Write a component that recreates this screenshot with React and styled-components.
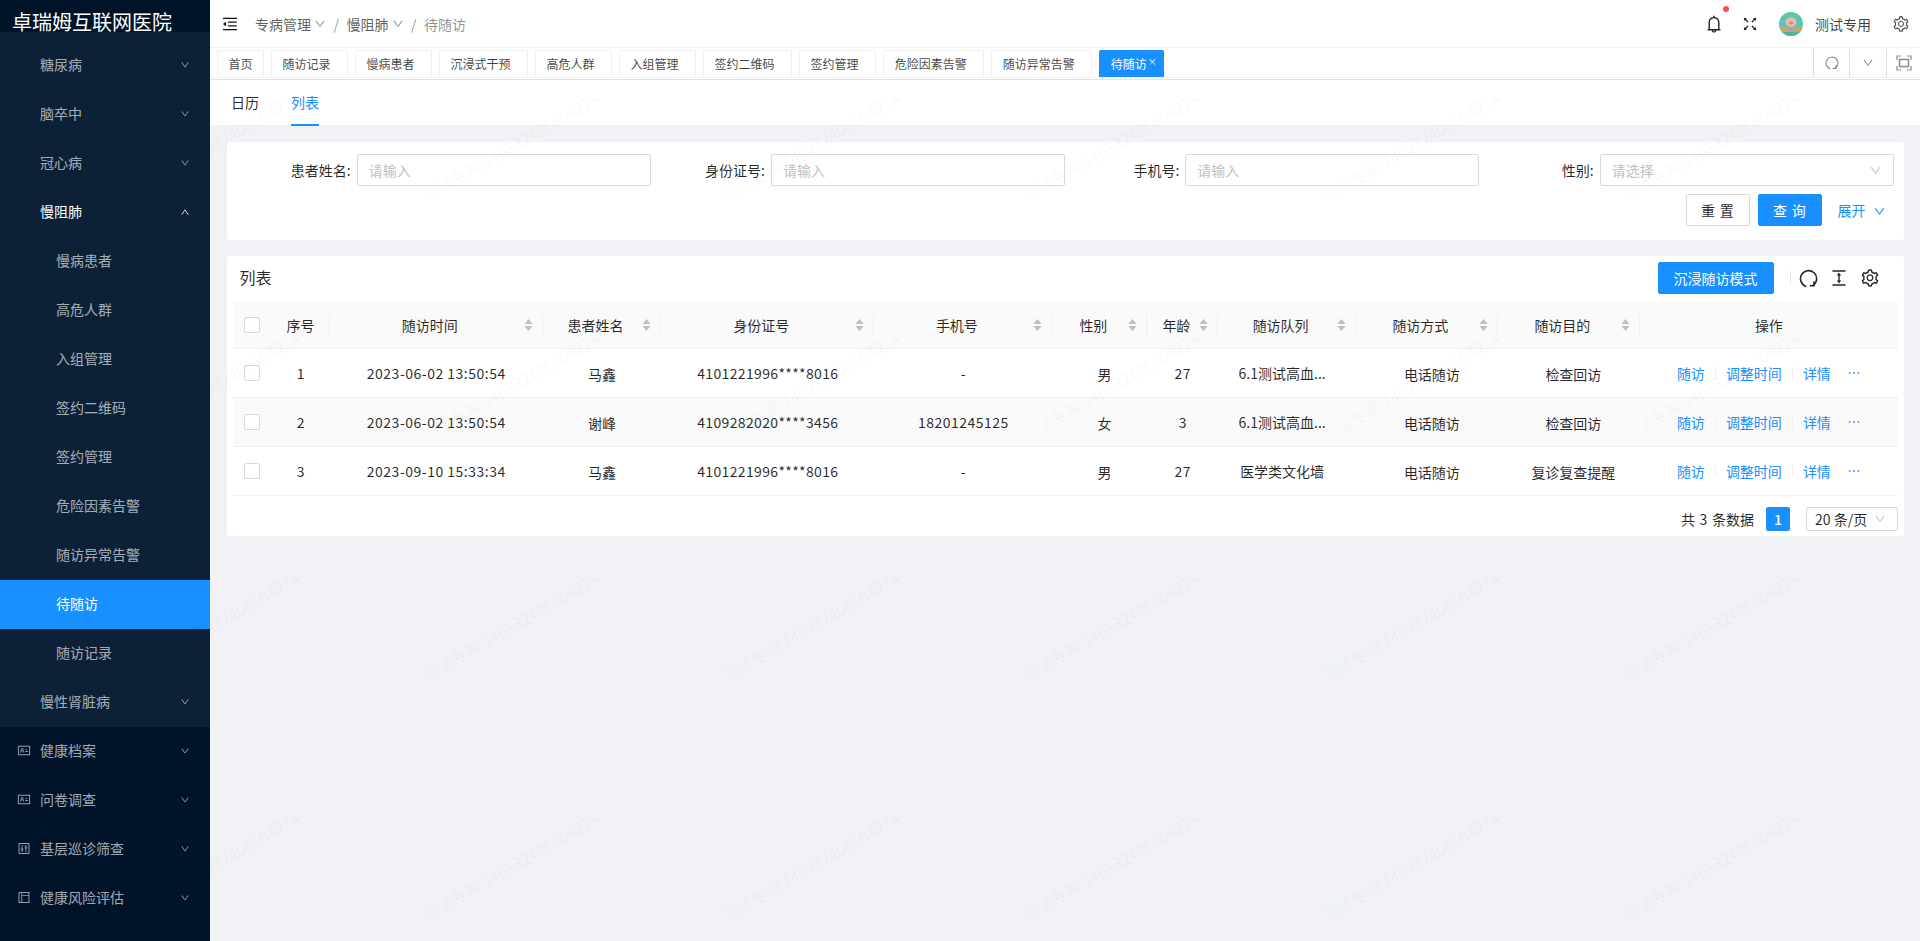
import React from 'react';
import styled, { createGlobalStyle } from 'styled-components';
import {
  AiOutlineMenuFold, AiOutlineDown, AiOutlineUp, AiOutlineBell, AiOutlineFullscreen,
  AiOutlineSetting, AiOutlineColumnHeight, AiOutlineEllipsis,
  AiOutlineIdcard, AiOutlineControl, AiOutlineLayout,
} from 'react-icons/ai';

const FONT = '"Noto Sans CJK SC", "Noto Sans", sans-serif';

const Global = createGlobalStyle`
  html, body { margin: 0; padding: 0; height: 100%; overflow: hidden; background: #f0f2f5; }
  body { font-family: ${FONT}; font-size: 14px; color: rgba(0,0,0,.85); }
  * { box-sizing: border-box; }
`;

const Page = styled.div`
  position: relative;
  display: grid;
  grid-template-columns: 210px 1fr;
  width: 1920px;
  height: 941px;
  overflow: hidden;
`;

/* ---------- sidebar ---------- */
const Sidebar = styled.aside`
  display: flex;
  flex-direction: column;
  background: #001329;
  height: 100%;
`;
const Logo = styled.div`
  height: 32px;
  overflow: hidden;
  padding-left: 12px;
  font-size: 20px;
  line-height: 44px;
  color: #fff;
  white-space: nowrap;
`;
const SubMenu = styled.div`
  background: #0c2136;
  padding-top: 8.5px;
`;
const MenuItem = styled.div`
  display: flex;
  align-items: center;
  height: 49px;
  padding: 0 20px 2px ${p => p.$indent}px;
  color: ${p => (p.$active || p.$open ? '#fff' : 'rgba(255,255,255,.65)')};
  background: ${p => (p.$active ? '#1890ff' : 'transparent')};
`;
const MenuLabel = styled.span`
  flex: 1;
`;
const MenuIcon = styled.span`
  display: flex;
  width: 14px;
  margin-right: 9px;
  font-size: 15px;
  color: rgba(255,255,255,.6);
`;
const MenuArrow = styled.span`
  display: flex;
  font-size: 10px;
  padding-top: 2px;
`;

/* ---------- main ---------- */
const Main = styled.main`
  display: flex;
  flex-direction: column;
  min-width: 0;
`;
const Header = styled.header`
  display: flex;
  align-items: center;
  height: 48px;
  padding: 0 10px 0 11px;
  background: #fff;
  border-bottom: 1px solid #f0f0f0;
`;
const CollapseButton = styled.span`
  display: flex;
  font-size: 18px;
  color: #111;
  margin-right: 16px;
`;
const Crumb = styled.span`
  display: flex;
  align-items: center;
  color: ${p => (p.$last ? 'rgba(0,0,0,.45)' : 'rgba(0,0,0,.65)')};
  font-size: 14px;
`;
const CrumbArrow = styled.span`
  display: flex;
  margin-left: 3px;
  font-size: 12px;
  color: rgba(0,0,0,.45);
`;
const CrumbSep = styled.span`
  margin: 0 7.5px;
  color: rgba(0,0,0,.45);
`;
const HeaderRight = styled.div`
  margin-left: auto;
  display: flex;
  align-items: center;
`;
const BellWrap = styled.span`
  position: relative;
  display: flex;
  font-size: 20px;
  color: #222;
  margin-right: 17px;
`;
const RedDot = styled.i`
  position: absolute;
  top: -8px;
  right: -5px;
  width: 6px;
  height: 6px;
  border-radius: 50%;
  background: #ff4d4f;
`;
const HeadIcon = styled.span`
  display: flex;
  font-size: ${p => p.$size || 16}px;
  color: ${p => p.$color || '#222'};
`;
const Avatar = styled.svg`
  width: 24px;
  height: 24px;
  border-radius: 50%;
  margin: 0 12px 0 20px;
`;
const UserName = styled.span`
  font-size: 14px;
  margin-right: 21px;
  color: rgba(0,0,0,.75);
`;

const TabBar = styled.div`
  display: flex;
  height: 32px;
  padding: 2px 0 0 7px;
  background: #fff;
  border-bottom: 1px solid #e4e4e4;
  box-shadow: inset 0 -1px 0 #fff, inset 0 -2px 0 #f0f0f0;
`;
const Tabs = styled.div`
  display: flex;
  gap: 7px;
  flex: 1;
  height: 27px;
`;
const Tab = styled.div`
  display: flex;
  align-items: center;
  height: 27px;
  padding: 0 10.5px 2px;
  font-size: 12px;
  white-space: nowrap;
  border-radius: 2px 2px 0 0;
  color: ${p => (p.$active ? '#fff' : 'rgba(0,0,0,.75)')};
  background: ${p => (p.$active ? '#1890ff' : '#fff')};
  border: 1px solid ${p => (p.$active ? '#1890ff' : '#f0f0f0')};
  border-bottom: 0;
`;
const TabClose = styled.span`
  display: inline-block;
  width: 6px;
  font-size: 9px;
  line-height: 9px;
  margin-top: -3px;
  margin-right: -1px;
  margin-left: 1px;
  color: ${p => (p.$show ? '#fff' : 'transparent')};
`;
const TabTool = styled.div`
  display: flex;
  align-items: center;
  justify-content: center;
  width: ${p => p.$w}px;
  height: 28px;
  margin-top: -1px;
  border-left: 1px solid #dcdcdc;
  color: #8c8c8c;
  font-size: ${p => p.$size || 14}px;
`;

const PageTabs = styled.div`
  display: flex;
  gap: 32px;
  height: 45px;
  padding-left: 21px;
  background: #fff;
`;
const PageTab = styled.div`
  height: 46px;
  line-height: 44px;
  font-size: 14px;
  color: ${p => (p.$active ? '#1890ff' : 'rgba(0,0,0,.85)')};
  border-bottom: 2px solid ${p => (p.$active ? '#1890ff' : 'transparent')};
`;

const Body = styled.div`
  flex: 1;
  display: flex;
  flex-direction: column;
  gap: 16px;
  padding: 17px 16px 0 17px;
`;
const SearchCard = styled.section`
  height: 98px;
  padding: 12px 10.5px 0 9.2px;
  background: #fff;
  border-radius: 2px;
`;
const SearchGrid = styled.div`
  display: grid;
  grid-template-columns: repeat(4, 1fr);
`;
const Field = styled.div`
  display: grid;
  grid-template-columns: 114.5px 1fr;
  column-gap: 6px;
  align-items: center;
`;
const FieldLabel = styled.label`
  text-align: right;
  font-size: 14px;
  color: rgba(0,0,0,.85);
`;
const InputBox = styled.div`
  display: flex;
  align-items: center;
  justify-content: space-between;
  height: 32px;
  padding: 0 11px;
  border: 1px solid #d9d9d9;
  border-radius: 2px;
  background: #fff;
  font-size: 14px;
  color: #bfbfbf;
`;
const SelectArrow = styled.span`
  display: flex;
  font-size: 13px;
  color: #bfbfbf;
`;
const SearchActions = styled.div`
  display: flex;
  align-items: center;
  justify-content: flex-end;
  gap: 8px;
  margin-top: 8px;
  padding-right: 8px;
`;
const Button = styled.button`
  display: inline-flex;
  align-items: center;
  justify-content: center;
  height: 32px;
  width: ${p => p.$w}px;
  padding: 0;
  font-family: ${FONT};
  font-size: 14px;
  border-radius: 2px;
  border: 1px solid ${p => (p.$primary ? '#1890ff' : '#d9d9d9')};
  background: ${p => (p.$primary ? '#1890ff' : '#fff')};
  color: ${p => (p.$primary ? '#fff' : 'rgba(0,0,0,.85)')};
  letter-spacing: ${p => (p.$spaced ? '.34em' : '0')};
  text-indent: ${p => (p.$spaced ? '.34em' : '0')};
`;
const Expand = styled.span`
  display: inline-flex;
  align-items: center;
  gap: 7px;
  margin-left: 8px;
  color: #1890ff;
  font-size: 14px;
`;
const ExpandIcon = styled.span`
  display: flex;
  font-size: 13px;
  padding-top: 2px;
`;

const TableCard = styled.section`
  height: 280px;
  padding: 0 6.4px;
  background: #fff;
  border-radius: 2px;
`;
const Toolbar = styled.div`
  display: flex;
  align-items: flex-start;
  height: 46px;
  padding: 6px 17px 0 6px;
`;
const ToolTitle = styled.div`
  flex: 1;
  font-size: 16px;
  line-height: 31px;
  color: rgba(0,0,0,.85);
`;
const ToolDivider = styled.i`
  width: 1px;
  height: 14px;
  margin: 9px 7px 0 16px;
  background: #e8e8e8;
`;
const ToolIcon = styled.span`
  display: flex;
  align-items: center;
  justify-content: center;
  width: 22px;
  height: 32px;
  margin-left: ${p => p.$gap || 0}px;
  font-size: 20px;
  color: #262626;
`;
const Table = styled.table`
  width: 100%;
  table-layout: fixed;
  border-collapse: separate;
  border-spacing: 0;
  font-size: 14px;
`;
const Th = styled.th`
  position: relative;
  height: 47px;
  padding: 0 8px;
  background: #fafafa;
  font-weight: 400;
  color: rgba(0,0,0,.85);
  border-bottom: 1px solid #f0f0f0;
  &::after {
    content: ${p => (p.$sep ? '""' : 'none')};
    position: absolute;
    top: 12px;
    right: 0;
    width: 1px;
    height: 22px;
    background: #f0f0f0;
  }
`;
const ThInner = styled.div`
  display: flex;
  align-items: center;
`;
const ThText = styled.span`
  flex: 1;
  text-align: center;
  white-space: nowrap;
`;
const SortIcon = styled.svg`
  width: 13px;
  height: 14px;
  flex: none;
`;
const Row = styled.tr`
  background: ${p => (p.$alt ? '#fafafa' : '#fff')};
`;
const Td = styled.td`
  height: 49px;
  padding: ${p => p.$down || 0}px ${p => p.$right || 0}px 0 ${p => p.$left || 0}px;
  text-align: center;
  white-space: nowrap;
  border-bottom: 1px solid #f0f0f0;
  color: rgba(0,0,0,.85);
  letter-spacing: ${p => p.$track || 0}px;
`;
const Check = styled.span`
  display: block;
  width: 16px;
  height: 16px;
  margin: 0 auto;
  border: 1px solid #d9d9d9;
  border-radius: 2px;
  background: #fff;
`;
const Actions = styled.div`
  display: flex;
  align-items: center;
  padding-left: 37px;
`;
const ActionLink = styled.a`
  color: #1890ff;
`;
const ActionSep = styled.i`
  width: 1px;
  height: 12px;
  margin: 0 10px;
  background: #f0f0f0;
`;
const MoreIcon = styled.span`
  display: flex;
  margin-left: 15px;
  font-size: 16px;
  color: #1890ff;
`;
const Pager = styled.div`
  display: flex;
  align-items: center;
  justify-content: flex-end;
  height: 24px;
  margin-top: 10.5px;
  font-size: 14px;
`;
const PagerTotal = styled.span`
  margin-right: 12px;
  word-spacing: 1.5px;
  color: rgba(0,0,0,.85);
`;
const PagerNum = styled.span`
  width: 24px;
  height: 24px;
  margin-right: 16px;
  line-height: 24px;
  text-align: center;
  border-radius: 2px;
  background: #1890ff;
  color: #fff;
  font-weight: 500;
`;
const PagerSize = styled.div`
  display: flex;
  align-items: center;
  justify-content: space-between;
  width: 91.6px;
  height: 24px;
  padding: 0 11px 0 8px;
  border: 1px solid #d9d9d9;
  border-radius: 2px;
  color: rgba(0,0,0,.85);
`;
const PagerArrow = styled.span`
  display: flex;
  font-size: 12px;
  color: #bfbfbf;
`;

/* ---------- watermark ---------- */
const Watermark = styled.div`
  position: absolute;
  top: 97px;
  left: 0;
  width: 1920px;
  height: 844px;
  display: grid;
  grid-template-columns: repeat(7, 300px);
  grid-auto-rows: 240px;
  overflow: hidden;
  pointer-events: none;
`;
const WaterTile = styled.div`
  position: relative;
  overflow: hidden;
`;
const WaterText = styled.span`
  position: absolute;
  left: 129px;
  top: 88px;
  font-size: 16px;
  line-height: 20px;
  white-space: nowrap;
  color: rgba(0,0,0,.04);
  transform-origin: 0 100%;
  transform: rotate(-30deg);
`;

/* ---------- data ---------- */
const groupA = ['糖尿病', '脑卒中', '冠心病'];
const subItems = ['慢病患者', '高危人群', '入组管理', '签约二维码', '签约管理', '危险因素告警', '随访异常告警', '待随访', '随访记录'];
const tabList = ['首页', '随访记录', '慢病患者', '沉浸式干预', '高危人群', '入组管理', '签约二维码', '签约管理', '危险因素告警', '随访异常告警', '待随访'];
const bottomMenu = [
  ['健康档案', AiOutlineIdcard],
  ['问卷调查', AiOutlineIdcard],
  ['基层巡诊筛查', AiOutlineControl],
  ['健康风险评估', AiOutlineLayout],
];
const cols = [38, 58.4, 213, 118.6, 213, 178, 95, 71, 137.5, 142, 142, 258];
const heads = [
  ['序号', false, true], ['随访时间', true, true], ['患者姓名', true, true], ['身份证号', true, true],
  ['手机号', true, true], ['性别', true, true], ['年龄', true, true], ['随访队列', true, true],
  ['随访方式', true, true], ['随访目的', true, true], ['操作', false, false],
];
const rows = [
  ['1', '2023-06-02 13:50:54', '马鑫', '4101221996****8016', '-', '男', '27', '6.1测试高血...', '电话随访', '检查回访'],
  ['2', '2023-06-02 13:50:54', '谢峰', '4109282020****3456', '18201245125', '女', '3', '6.1测试高血...', '电话随访', '检查回访'],
  ['3', '2023-09-10 15:33:34', '马鑫', '4101221996****8016', '-', '男', '27', '医学类文化墙', '电话随访', '复诊复查提醒'],
];
const fields = [['患者姓名:', '请输入'], ['身份证号:', '请输入'], ['手机号:', '请输入'], ['性别:', '请选择', true]];

const Sorter = () => (
  <SortIcon viewBox="0 0 13 14">
    <path d="M6.5 1 L10.5 6 H2.5 Z" fill="#bfbfbf" />
    <path d="M6.5 13 L10.5 8 H2.5 Z" fill="#bfbfbf" />
  </SortIcon>
);

const ReloadIcon = ({ size }) => (
  <svg width={size} height={size} viewBox="0 0 24 24" fill="none" stroke="currentColor" strokeWidth="2">
    <path d="M9 22A10.2 10.2 0 1 1 18 20.6" />
    <path d="M19 15.5V21.2H13.5" />
  </svg>
);

const FocusIcon = () => (
  <svg width="16" height="16" viewBox="0 0 16 16" fill="none" stroke="#8c8c8c" strokeWidth="1.2">
    <path d="M1 5V1h4M11 1h4v4M15 11v4h-4M5 15H1v-4" />
    <rect x="3.5" y="4.5" width="9" height="7" strokeWidth="1.5" />
  </svg>
);

const AvatarArt = () => (
  <Avatar viewBox="0 0 24 24">
    <rect width="24" height="24" fill="#5dc4b1" />
    <rect x="0" y="15" width="24" height="5" fill="#c9a658" />
    <rect x="7.5" y="13" width="9" height="11" fill="#a8a8a0" />
    <ellipse cx="12" cy="10" rx="5.5" ry="4.8" fill="#e6bcaa" />
    <ellipse cx="12" cy="11" rx="2.2" ry="1.5" fill="#c98e7e" />
    <rect x="0" y="20" width="24" height="4" fill="#4fb3a2" />
  </Avatar>
);

export default function App() {
  return (
    <>
      <Global />
      <Page>
        <Sidebar>
          <Logo>卓瑞姆互联网医院</Logo>
          <SubMenu>
            {groupA.map(t => (
              <MenuItem key={t} $indent={40}>
                <MenuLabel>{t}</MenuLabel>
                <MenuArrow><AiOutlineDown /></MenuArrow>
              </MenuItem>
            ))}
            <MenuItem $indent={40} $open>
              <MenuLabel>慢阻肺</MenuLabel>
              <MenuArrow><AiOutlineUp /></MenuArrow>
            </MenuItem>
            {subItems.map(t => (
              <MenuItem key={t} $indent={56} $active={t === '待随访'}>
                <MenuLabel>{t}</MenuLabel>
              </MenuItem>
            ))}
            <MenuItem $indent={40}>
              <MenuLabel>慢性肾脏病</MenuLabel>
              <MenuArrow><AiOutlineDown /></MenuArrow>
            </MenuItem>
          </SubMenu>
          {bottomMenu.map(([t, Icon]) => (
            <MenuItem key={t} $indent={17}>
              <MenuIcon><Icon /></MenuIcon>
              <MenuLabel>{t}</MenuLabel>
              <MenuArrow><AiOutlineDown /></MenuArrow>
            </MenuItem>
          ))}
        </Sidebar>

        <Main>
          <Header>
            <CollapseButton><AiOutlineMenuFold /></CollapseButton>
            <Crumb>专病管理<CrumbArrow><AiOutlineDown /></CrumbArrow></Crumb>
            <CrumbSep>/</CrumbSep>
            <Crumb>慢阻肺<CrumbArrow><AiOutlineDown /></CrumbArrow></Crumb>
            <CrumbSep>/</CrumbSep>
            <Crumb $last>待随访</Crumb>
            <HeaderRight>
              <BellWrap><AiOutlineBell /><RedDot /></BellWrap>
              <HeadIcon $size={18}><AiOutlineFullscreen /></HeadIcon>
              <AvatarArt />
              <UserName>测试专用</UserName>
              <HeadIcon $size={18} $color="#595959"><AiOutlineSetting /></HeadIcon>
            </HeaderRight>
          </Header>

          <TabBar>
            <Tabs>
              {tabList.map((t, i) => (
                <Tab key={t} $active={t === '待随访'}>
                  {t}
                  {i > 0 && <TabClose $show={t === '待随访'}>×</TabClose>}
                </Tab>
              ))}
            </Tabs>
            <TabTool $w={36}><ReloadIcon size={14} /></TabTool>
            <TabTool $w={37} $size={12}><AiOutlineDown /></TabTool>
            <TabTool $w={34}><FocusIcon /></TabTool>
          </TabBar>

          <PageTabs>
            <PageTab>日历</PageTab>
            <PageTab $active>列表</PageTab>
          </PageTabs>

          <Body>
            <SearchCard>
              <SearchGrid>
                {fields.map(([label, ph, isSelect]) => (
                  <Field key={label}>
                    <FieldLabel>{label}</FieldLabel>
                    <InputBox>
                      {ph}
                      {isSelect && <SelectArrow><AiOutlineDown /></SelectArrow>}
                    </InputBox>
                  </Field>
                ))}
              </SearchGrid>
              <SearchActions>
                <Button $w={64} $spaced>重置</Button>
                <Button $w={64} $primary $spaced>查询</Button>
                <Expand>展开<ExpandIcon><AiOutlineDown /></ExpandIcon></Expand>
              </SearchActions>
            </SearchCard>

            <TableCard>
              <Toolbar>
                <ToolTitle>列表</ToolTitle>
                <Button $w={116} $primary>沉浸随访模式</Button>
                <ToolDivider />
                <ToolIcon><ReloadIcon size={19} /></ToolIcon>
                <ToolIcon $gap={8}><AiOutlineColumnHeight /></ToolIcon>
                <ToolIcon $gap={9}><AiOutlineSetting /></ToolIcon>
              </Toolbar>
              <Table>
                <colgroup>
                  {cols.map((w, i) => <col key={i} style={{ width: w }} />)}
                </colgroup>
                <thead>
                  <tr>
                    <Th><Check /></Th>
                    {heads.map(([t, sort, sep]) => (
                      <Th key={t} $sep={sep}>
                        <ThInner>
                          <ThText>{t}</ThText>
                          {sort && <Sorter />}
                        </ThInner>
                      </Th>
                    ))}
                  </tr>
                </thead>
                <tbody>
                  {rows.map((r, i) => (
                    <Row key={r[0]} $alt={i === 1}>
                      <Td><Check /></Td>
                      <Td>{r[0]}</Td>
                      <Td $track={0.5}>{r[1]}</Td>
                      <Td $down={1}>{r[2]}</Td>
                      <Td $track={0.35}>{r[3]}</Td>
                      <Td $track={0.5}>{r[4]}</Td>
                      <Td $down={1} $left={9}>{r[5]}</Td>
                      <Td $track={0.5}>{r[6]}</Td>
                      <Td $right={10}>{r[7]}</Td>
                      <Td $down={1} $left={10}>{r[8]}</Td>
                      <Td $down={1} $left={9}>{r[9]}</Td>
                      <Td>
                        <Actions>
                          <ActionLink>随访</ActionLink>
                          <ActionSep />
                          <ActionLink>调整时间</ActionLink>
                          <ActionSep />
                          <ActionLink>详情</ActionLink>
                          <MoreIcon><AiOutlineEllipsis /></MoreIcon>
                        </Actions>
                      </Td>
                    </Row>
                  ))}
                </tbody>
              </Table>
              <Pager>
                <PagerTotal>共 3 条数据</PagerTotal>
                <PagerNum>1</PagerNum>
                <PagerSize>20 条/页<PagerArrow><AiOutlineDown /></PagerArrow></PagerSize>
              </Pager>
            </TableCard>
          </Body>
        </Main>

        <Watermark>
          {Array.from({ length: 28 }).map((_, i) => (
            <WaterTile key={i}><WaterText>测试专用 146332406604274</WaterText></WaterTile>
          ))}
        </Watermark>
      </Page>
    </>
  );
}
